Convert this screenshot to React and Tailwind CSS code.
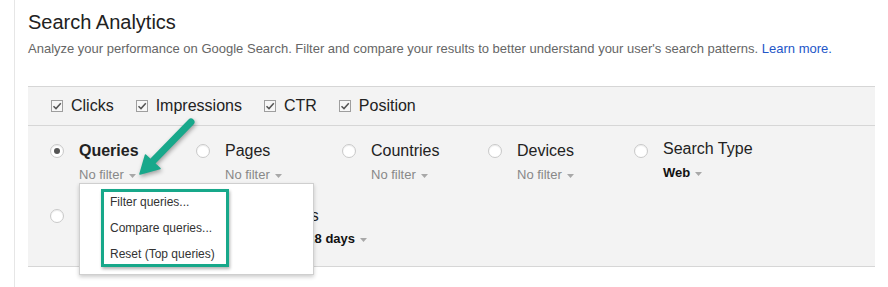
import React from "react";

function Check({ label }) {
  return (
    <div className="flex items-center gap-[8px]">
      <span className="w-[12px] h-[12px] border border-[#9e9e9e] bg-[#f7f7f7] flex items-center justify-center">
        <svg width="10" height="10" viewBox="0 0 10 10">
          <path d="M1.5 5.2 L4 7.6 L8.8 2.2" fill="none" stroke="#555" strokeWidth="1.5" />
        </svg>
      </span>
      <span className="text-[16px] leading-[18px] text-[#222]">{label}</span>
    </div>
  );
}

function Caret() {
  return (
    <svg width="7" height="4" viewBox="0 0 7 4" className="ml-[5px] mt-[1px]">
      <polygon points="0,0 7,0 3.5,4" fill="#a8a8a8" />
    </svg>
  );
}

function Radio({ selected }) {
  return (
    <span className="mt-[2px] w-[14px] h-[14px] rounded-full border border-[#c9c9c9] bg-white flex items-center justify-center shrink-0 shadow-[inset_0_1px_1px_rgba(0,0,0,0.08)]">
      {selected && <span className="w-[6px] h-[6px] rounded-full bg-[#555]" />}
    </span>
  );
}

function Dim({ label, value, selected, bold, valueBold, shift }) {
  return (
    <div className="flex items-start gap-[15px]">
      <Radio selected={selected} />
      <div className={shift ? "-mt-[2px]" : ""}>
        <div className={"text-[16px] leading-[18px] text-[#222] whitespace-nowrap " + (bold ? "font-bold" : "")}>{label}</div>
        <div className="mt-[7px] flex items-center text-[13px] leading-[16px] whitespace-nowrap">
          <span className={valueBold ? "font-bold text-[#111]" : "text-[#888]"}>{value}</span>
          <Caret />
        </div>
      </div>
    </div>
  );
}

export default function App() {
  return (
    <div className="relative w-[888px] h-[287px] bg-white overflow-hidden font-['Liberation_Sans',Arial,sans-serif]">
      <div className="ml-[14px] h-full border-l border-[#e6e6e6] pl-[13px]">
        <div className="pt-[10px] text-[20px] leading-[24px] text-[#222]">Search Analytics</div>
        <div className="mt-[7px] text-[13px] leading-[16px] text-[#666]">
          Analyze your performance on Google Search. Filter and compare your results to better understand your user's search patterns.{" "}
          <span className="text-[#2356c8]">Learn more.</span>
        </div>
        <div className="mt-[29px] w-[847px] bg-[#f3f3f3] border-t border-b border-[#d6d6d6]">
          <div className="h-[39px] flex items-center pl-[23px] gap-[22px] border-b border-[#d6d6d6]">
            <Check label="Clicks" />
            <Check label="Impressions" />
            <Check label="CTR" />
            <Check label="Position" />
          </div>
          <div className="h-[140px] pl-[22px] pt-[16px]">
            <div className="grid grid-cols-[146px_146px_146px_146px_146px]">
              <Dim label="Queries" value="No filter" selected bold />
              <Dim label="Pages" value="No filter" />
              <Dim label="Countries" value="No filter" />
              <Dim label="Devices" value="No filter" />
              <Dim label="Search Type" value="Web" valueBold shift />
            </div>
            <div className="mt-[24px] flex items-start">
              <div className="w-[227px] flex items-start">
                <Radio />
              </div>
              <div>
                <div className="text-[16px] leading-[18px] text-[#222]">Dates</div>
                <div className="mt-[6px] flex items-center text-[13px] leading-[16px] font-bold text-[#111]">
                  Last 28 days
                  <Caret />
                </div>
              </div>
            </div>
          </div>
        </div>
      </div>

      {/* dropdown menu */}
      <div className="absolute left-[79px] top-[183px] w-[235px] h-[92px] bg-white border border-[#cfcfcf] shadow-[0_2px_4px_rgba(0,0,0,0.2)]">
        <div className="ml-[21px] mt-[5px] w-[128px] h-[78px] border-[3px] border-[#17a88a] pl-[6px] pt-[3px] flex flex-col gap-[12px] shadow-[1px_2px_3px_rgba(0,0,0,0.3)] text-[12px] leading-[14px] text-[#333] whitespace-nowrap">
          <div>Filter queries...</div>
          <div>Compare queries...</div>
          <div>Reset (Top queries)</div>
        </div>
      </div>

      {/* annotation arrow */}
      <svg
        className="absolute left-0 top-0 pointer-events-none drop-shadow-[1px_2px_2px_rgba(0,0,0,0.35)]"
        width="888"
        height="287"
        viewBox="0 0 888 287"
      >
        <line x1="191" y1="122" x2="153" y2="161" stroke="#18a88b" strokeWidth="7" strokeLinecap="round" />
        <polygon points="140,174 145.5,155 160,168.5" fill="#18a88b" stroke="#18a88b" strokeWidth="1.5" strokeLinejoin="round" />
      </svg>
    </div>
  );
}
